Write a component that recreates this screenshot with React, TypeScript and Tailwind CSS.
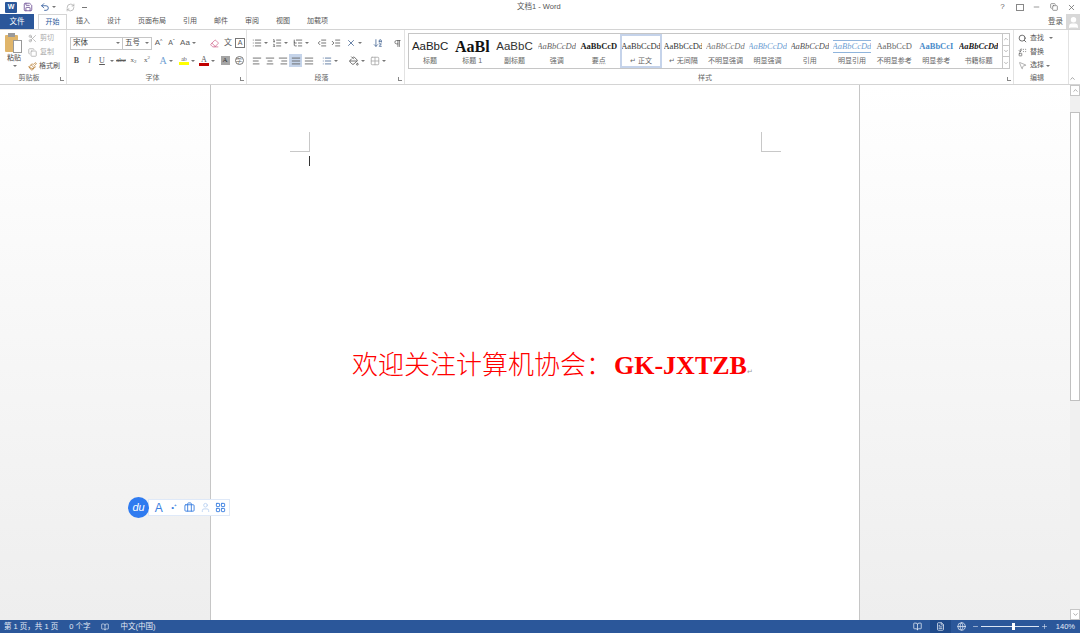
import React from 'react'
import {
  AlignCenter, AlignJustify, AlignLeft, AlignRight, ArrowDownAZ, BookOpen, Briefcase, ChevronDown, ChevronUp,
  Copy, Eraser, FileText, Grid2x2, Indent, LayoutGrid, List, ListOrdered, ListTree, Minus, MousePointer2,
  Outdent, PaintBucket, Paintbrush, Pilcrow, Plus, RefreshCw, Replace, Save, Scissors, Search,
  Globe, Undo2, User, X,
} from 'lucide-react'

const cjk = "font-['Liberation_Sans','Noto_Sans_CJK_SC',sans-serif]"

const tabs = ['插入', '设计', '页面布局', '引用', '邮件', '审阅', '视图', '加载项']

const styleItems = [
  { sample: 'AaBbC', label: '标题', cls: "text-[11.5px] font-['Liberation_Sans',sans-serif] text-[#222]" },
  { sample: 'AaBl', label: '标题 1', cls: "text-[16px] font-bold font-['Liberation_Serif',serif] text-[#111]" },
  { sample: 'AaBbC', label: '副标题', cls: "text-[11.5px] font-['Liberation_Sans',sans-serif] text-[#333]" },
  { sample: 'AaBbCcDd', label: '强调', cls: "text-[8.5px] italic font-['Liberation_Serif',serif] text-[#666]" },
  { sample: 'AaBbCcD', label: '要点', cls: "text-[8.5px] font-bold font-['Liberation_Serif',serif] text-[#222]" },
  { sample: 'AaBbCcDd', label: '↵ 正文', cls: "text-[8.5px] font-['Liberation_Serif',serif] text-[#333]", active: true },
  { sample: 'AaBbCcDd', label: '↵ 无间隔', cls: "text-[8.5px] font-['Liberation_Serif',serif] text-[#333]" },
  { sample: 'AaBbCcDd', label: '不明显强调', cls: "text-[8.5px] italic font-['Liberation_Serif',serif] text-[#777]" },
  { sample: 'AaBbCcDd', label: '明显强调', cls: "text-[8.5px] italic font-['Liberation_Serif',serif] text-[#6f9fd3]" },
  { sample: 'AaBbCcDd', label: '引用', cls: "text-[8.5px] italic font-['Liberation_Serif',serif] text-[#555]" },
  { sample: 'AaBbCcDd', label: '明显引用', cls: "text-[8.5px] italic font-['Liberation_Serif',serif] text-[#6f9fd3] border-y border-[#8fb4dc]" },
  { sample: 'AaBbCcD', label: '不明显参考', cls: "text-[8.5px] font-['Liberation_Serif',serif] text-[#666]" },
  { sample: 'AaBbCcI', label: '明显参考', cls: "text-[8.5px] font-bold font-['Liberation_Serif',serif] text-[#4a8ccb]" },
  { sample: 'AaBbCcDd', label: '书籍标题', cls: "text-[8.5px] font-bold italic font-['Liberation_Serif',serif] text-[#222]" },
]

function Cell({ w, children, className = '' }: { w: string; children: React.ReactNode; className?: string }) {
  return <div className={`${w} h-[13px] shrink-0 flex items-center justify-center text-[#5a5a5a] ${className}`}>{children}</div>
}

function Caret() {
  return <span className="ml-[2px] shrink-0 w-0 h-0 border-x-[2px] border-x-transparent border-t-[2px] border-t-[#777]" />
}

function GroupLabel({ text, launcher = true }: { text: string; launcher?: boolean }) {
  return (
    <div className="relative h-[11px] pr-[8px] flex items-center justify-center text-[7px] text-[#666]">
      {text}
      {launcher && <span className="absolute right-[2px] bottom-[3px] w-[4px] h-[4px] border-l border-b border-[#888]" />}
    </div>
  )
}

export default function App() {
  return (
    <div className={`w-[1080px] h-[633px] overflow-hidden flex flex-col bg-white ${cjk}`}>
      {/* title bar */}
      <div className="h-[14px] flex items-center text-[#555] relative shrink-0">
        <div className="ml-[5px] w-[12px] h-[11px] bg-[#2b579a] rounded-[1px] flex items-center justify-center text-white text-[7px] font-bold">W</div>
        <Save className="ml-[6px] w-[10px] h-[10px] text-[#6a4c93]" />
        <Undo2 className="ml-[7px] w-[10px] h-[10px] text-[#2b579a]" />
        <Caret />
        <RefreshCw className="ml-[10px] w-[9px] h-[9px] text-[#aaa]" />
        <span className="ml-[7px] w-[5px] border-b border-[#777]" />
        <div className="absolute left-[517px] top-[1px] text-[7.5px] text-[#555]">文档1 - Word</div>
        <div className="ml-auto flex items-center text-[#666]">
          <span className="w-[17px] text-center text-[8px]">?</span>
          <span className="w-[17px] flex justify-center"><span className="w-[8px] h-[7px] border border-[#888]" /></span>
          <Minus className="w-[17px] h-[8px]" />
          <span className="w-[18px] flex justify-center"><Copy className="w-[8px] h-[8px]" /></span>
          <X className="w-[17px] h-[9px]" />
        </div>
      </div>

      {/* tabs */}
      <div className="h-[15px] flex items-end shrink-0 relative">
        <div className="w-[34px] h-[15px] bg-[#2b579a] text-white text-[7.5px] flex items-center justify-center">文件</div>
        <div className="ml-[4px] w-[29px] h-[15px] bg-white border-x border-t border-[#d4d4d4] text-[#2b579a] text-[7px] flex items-center justify-center">开始</div>
        <div className="ml-[9px] flex gap-[17px] h-[15px] items-center text-[7px] text-[#555]">
          {tabs.map((t) => <span key={t}>{t}</span>)}
        </div>
        <div className="ml-auto flex items-center h-[15px]">
          <span className="text-[7.5px] text-[#555] mr-[3px]">登录</span>
          <div className="w-[14px] h-[15px] bg-[#d8d8d8] flex items-end justify-center overflow-hidden">
            <User className="w-[13px] h-[13px] text-white" fill="white" />
          </div>
        </div>
      </div>

      {/* ribbon */}
      <div className="h-[56px] flex shrink-0 border-y border-[#d4d4d4] relative">
        {/* clipboard */}
        <div className="w-[67px] flex flex-col border-r border-[#e2e2e2] shrink-0">
          <div className="flex-1 flex pt-[1px]">
            <div className="w-[28px] flex flex-col items-center">
              <div className="relative w-[18px] h-[20px] mt-[2px]">
                <div className="absolute left-0 top-[2px] w-[13px] h-[17px] bg-[#e0b56a] rounded-[1px]" />
                <div className="absolute left-[3px] top-0 w-[7px] h-[4px] bg-[#9a9a9a]" />
                <div className="absolute left-[8px] top-[7px] w-[9px] h-[13px] bg-white border border-[#999]" />
              </div>
              <span className="text-[7px] text-[#444] leading-[9px]">粘贴</span>
              <span className="mt-[3px] flex"><Caret /></span>
            </div>
            <div className="flex flex-col text-[7px] gap-[1px] pt-[1px]">
              <div className="h-[13px] flex items-center text-[#aaa]"><Scissors className="w-[9px] h-[9px] mr-[3px]" />剪切</div>
              <div className="h-[13px] flex items-center text-[#aaa]"><Copy className="w-[9px] h-[9px] mr-[3px]" />复制</div>
              <div className="h-[13px] flex items-center text-[#555]"><Paintbrush className="w-[9px] h-[9px] mr-[2px] text-[#b5782a]" />格式刷</div>
            </div>
          </div>
          <GroupLabel text="剪贴板" />
        </div>

        {/* font */}
        <div className="w-[180px] flex flex-col border-r border-[#e2e2e2] shrink-0">
          <div className="flex-1 pl-[3px] pt-[6px]">
            <div className="flex items-center h-[14px]">
              <div className="w-[53px] shrink-0 h-[13px] border border-[#c6c6c6] text-[7.5px] text-[#444] flex items-center justify-between px-[2px]">宋体<Caret /></div>
              <div className="w-[29px] shrink-0 h-[13px] border border-l-0 border-[#c6c6c6] text-[7.5px] text-[#444] flex items-center justify-between px-[2px]">五号<Caret /></div>
              <Cell w="w-[13px]" className="text-[8px]">A<sup className="text-[5px]">^</sup></Cell>
              <Cell w="w-[13px]" className="text-[7px]">A<sup className="text-[5px]">ˇ</sup></Cell>
              <Cell w="w-[20px]" className="text-[8px]">Aa<Caret /></Cell>
              <Cell w="w-[14px]" className="ml-[9px]"><Eraser className="w-[9px] h-[9px] text-[#d0608a]" /></Cell>
              <Cell w="w-[14px]" className="text-[8px]">文</Cell>
              <Cell w="w-[10px]"><span className="w-[10px] h-[10px] border border-[#777] flex items-center justify-center text-[7px]">A</span></Cell>
            </div>
            <div className="flex items-center h-[13px] mt-[4px] font-['Liberation_Serif',serif]">
              <Cell w="w-[13px]" className="text-[8px] font-bold">B</Cell>
              <Cell w="w-[13px]" className="text-[8px] italic">I</Cell>
              <Cell w="w-[12px]" className="text-[8px] underline">U</Cell>
              <Caret />
              <Cell w="w-[14px]" className="text-[7px] line-through">abc</Cell>
              <Cell w="w-[11px]" className="text-[7px]">x<sub className="text-[5px]">2</sub></Cell>
              <Cell w="w-[16px]" className="text-[7px]">x<sup className="text-[5px]">2</sup></Cell>
              <Cell w="w-[22px]" className="text-[10px] text-[#6f9fd3]">A<Caret /></Cell>
              <Cell w="w-[20px]"><span className="w-[10px] h-[9px] border-b-[3px] border-[#ffff00] text-[6px] leading-[6px] text-center">ab</span><Caret /></Cell>
              <Cell w="w-[20px]"><span className="w-[10px] h-[10px] border-b-[3px] border-[#c00000] text-[8px] leading-[7px] text-center">A</span><Caret /></Cell>
              <Cell w="w-[16px]"><span className="w-[9px] h-[9px] bg-[#a5a5a5] text-[7px] leading-[9px] text-center text-[#333]">A</span></Cell>
              <Cell w="w-[12px]"><span className="w-[9px] h-[9px] rounded-full border border-[#777] text-[6px] leading-[8px] text-center">字</span></Cell>
            </div>
          </div>
          <GroupLabel text="字体" />
        </div>

        {/* paragraph */}
        <div className="w-[158px] flex flex-col border-r border-[#e2e2e2] shrink-0">
          <div className="flex-1 pl-[3px] pt-[6px]">
            <div className="flex items-center h-[14px]">
              <Cell w="w-[20px]"><List className="w-[10px] h-[10px]" /><Caret /></Cell>
              <Cell w="w-[20px]"><ListOrdered className="w-[10px] h-[10px]" /><Caret /></Cell>
              <Cell w="w-[22px]"><ListTree className="w-[10px] h-[10px]" /><Caret /></Cell>
              <Cell w="w-[14px]" className="ml-[3px]"><Outdent className="w-[10px] h-[10px]" /></Cell>
              <Cell w="w-[14px]"><Indent className="w-[10px] h-[10px]" /></Cell>
              <Cell w="w-[22px]"><X className="w-[10px] h-[10px] text-[#4a6a96]" /><Caret /></Cell>
              <Cell w="w-[20px]" className="ml-[3px]"><ArrowDownAZ className="w-[10px] h-[10px] text-[#4a6a96]" /></Cell>
              <Cell w="w-[14px]" className="ml-[2px]"><Pilcrow className="w-[9px] h-[9px]" /></Cell>
            </div>
            <div className="flex items-center h-[13px] mt-[4px]">
              <Cell w="w-[13px]"><AlignLeft className="w-[10px] h-[10px]" /></Cell>
              <Cell w="w-[13px]"><AlignCenter className="w-[10px] h-[10px]" /></Cell>
              <Cell w="w-[13px]"><AlignRight className="w-[10px] h-[10px]" /></Cell>
              <Cell w="w-[13px]" className="bg-[#c5d4ea]"><AlignJustify className="w-[10px] h-[10px]" /></Cell>
              <Cell w="w-[13px]"><AlignJustify className="w-[10px] h-[10px]" /></Cell>
              <Cell w="w-[20px]" className="ml-[5px]"><List className="w-[10px] h-[10px] text-[#4a6a96]" /><Caret /></Cell>
              <Cell w="w-[22px]" className="ml-[6px]"><PaintBucket className="w-[10px] h-[10px]" /><Caret /></Cell>
              <Cell w="w-[20px]"><Grid2x2 className="w-[10px] h-[10px] text-[#aaa]" /><Caret /></Cell>
            </div>
          </div>
          <GroupLabel text="段落" />
        </div>

        {/* styles */}
        <div className="flex-1 flex flex-col border-r border-[#e2e2e2] min-w-0">
          <div className="flex-1 pl-[3px] pt-[3px]">
            <div className="w-[602px] h-[36px] border border-[#c6c6c6] flex">
              <div className="flex-1 flex min-w-0">
                {styleItems.map((s, i) => (
                  <div key={i} className={`w-[42.2px] shrink-0 h-full flex flex-col items-center overflow-hidden ${s.active ? 'border-2 border-[#c5d3ea]' : 'border-2 border-transparent'}`}>
                    <div className="h-[20px] w-full flex items-center justify-center overflow-hidden whitespace-nowrap">
                      <span className={`leading-[11px] ${s.cls}`}>{s.sample}</span>
                    </div>
                    <span className="text-[7px] leading-[9px] text-[#666] whitespace-nowrap">{s.label}</span>
                  </div>
                ))}
              </div>
              <div className="w-[7px] shrink-0 flex flex-col border-l border-[#c6c6c6] text-[#777]">
                <div className="flex-1 flex items-center justify-center border-b border-[#c6c6c6]"><ChevronUp className="w-[6px] h-[6px]" /></div>
                <div className="flex-1 flex items-center justify-center border-b border-[#c6c6c6]"><ChevronDown className="w-[6px] h-[6px]" /></div>
                <div className="flex-1 flex items-center justify-center"><ChevronDown className="w-[6px] h-[6px]" /></div>
              </div>
            </div>
          </div>
          <GroupLabel text="样式" />
        </div>

        {/* editing */}
        <div className="w-[55px] flex flex-col shrink-0 mr-[11px] border-r border-[#e2e2e2]">
          <div className="flex-1 pl-[4px] pt-[1px] text-[7px] text-[#555] flex flex-col">
            <div className="h-[14px] flex items-center"><Search className="w-[9px] h-[9px] mr-[3px] text-[#444]" />查找<span className="ml-[3px] flex"><Caret /></span></div>
            <div className="h-[14px] flex items-center"><Replace className="w-[9px] h-[9px] mr-[3px] text-[#666]" />替换</div>
            <div className="h-[13px] flex items-center"><MousePointer2 className="w-[9px] h-[9px] mr-[3px] text-[#999]" />选择<Caret /></div>
          </div>
          <GroupLabel text="编辑" launcher={false} />
        </div>
        <ChevronUp className="absolute right-[4px] bottom-[2px] w-[7px] h-[7px] text-[#666]" />
      </div>

      {/* document area */}
      <div className="flex-1 flex min-h-0 relative">
        <div className="flex-1 flex justify-start bg-gradient-to-b from-white to-[#eeeeee]">
          <div className="ml-[210px] w-[650px] h-full bg-white border-x border-[#c6c6c6] relative">
            <div className="absolute left-[79px] top-[47px] w-[20px] h-[20px] border-r border-b border-[#c8c8c8]" />
            <div className="absolute left-[550px] top-[47px] w-[20px] h-[20px] border-l border-b border-[#c8c8c8]" />
            <div className="absolute left-[98px] top-[71px] w-px h-[10px] bg-[#333]" />
            <p className="pl-[141px] pt-[263px] text-[26px] leading-[36px] whitespace-nowrap text-[#ff0000] font-['Liberation_Serif','Noto_Sans_CJK_SC',serif]">
              <span className="font-light">欢迎关注计算机协会：</span>
              <span className="ml-[2px] font-bold">GK-JXTZB</span>
              <span className="text-[7px] text-[#999]">↵</span>
            </p>
          </div>
        </div>

        {/* scrollbar */}
        <div className="w-[10px] flex flex-col bg-[#f0f0f0] text-[#777] shrink-0">
          <div className="h-[11px] flex items-center justify-center bg-white border border-[#c6c6c6]"><ChevronUp className="w-[7px] h-[7px]" /></div>
          <div className="h-[16px]" />
          <div className="h-[289px] bg-white border border-[#c0c0c0]" />
          <div className="flex-1" />
          <div className="h-[11px] flex items-center justify-center bg-white border border-[#c6c6c6]"><ChevronDown className="w-[7px] h-[7px]" /></div>
        </div>

        {/* floating baidu toolbar */}
        <div className="absolute left-[128px] top-[412px] flex items-center text-[#3a7fe0]">
          <div className="w-[21px] h-[21px] rounded-full bg-[#2f7bf0] text-white text-[11px] italic font-medium flex items-center justify-center z-10">du</div>
          <div className="-ml-px h-[17px] w-[82px] bg-white border border-[#dfe9f8] flex items-center pl-[2px]">
            <span className="w-[15.5px] text-center text-[12px] leading-none">A</span>
            <span className="w-[15.5px] text-center text-[8px] leading-none">•⁺</span>
            <span className="w-[15.5px] flex justify-center"><Briefcase className="w-[11px] h-[11px]" /></span>
            <span className="w-[15.5px] flex justify-center"><User className="w-[11px] h-[11px] text-[#bcd3f2]" /></span>
            <span className="w-[15.5px] flex justify-center"><LayoutGrid className="w-[11px] h-[11px]" /></span>
          </div>
        </div>
      </div>

      {/* status bar */}
      <div className="h-[13px] bg-[#2b579a] text-[7.5px] text-[#e4ebf6] flex items-center shrink-0">
        <span className="ml-[4px]">第 1 页，共 1 页</span>
        <span className="ml-[11px]">0 个字</span>
        <BookOpen className="ml-[11px] w-[8px] h-[8px]" />
        <span className="ml-[11px]">中文(中国)</span>
        <div className="ml-auto flex items-center h-full">
          <BookOpen className="w-[9px] h-[9px]" />
          <div className="ml-[8px] w-[21px] h-full bg-[#1f4a8a] flex items-center justify-center"><FileText className="w-[9px] h-[9px]" /></div>
          <Globe className="ml-[6px] w-[9px] h-[9px]" />
          <Minus className="ml-[6px] w-[7px] h-[7px]" />
          <div className="ml-[2px] relative w-[58px] h-px bg-[#dbe5f3]">
            <span className="absolute left-[31px] -top-[3px] w-[3px] h-[7px] bg-white" />
          </div>
          <Plus className="ml-[2px] w-[7px] h-[7px]" />
          <span className="ml-[8px] mr-[5px]">140%</span>
        </div>
      </div>
    </div>
  )
}
